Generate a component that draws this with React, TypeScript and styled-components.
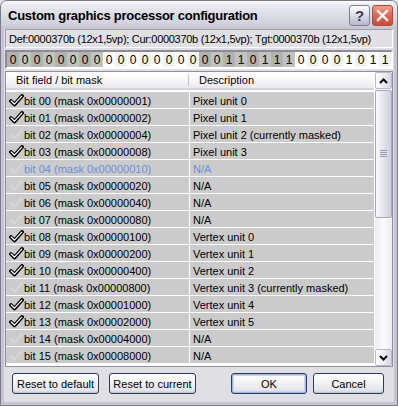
import React from "react";
import styled, { createGlobalStyle, css } from "styled-components";

const GlobalStyle = createGlobalStyle`
  html, body {
    margin: 0;
    padding: 0;
    background: #e0dfe3;
  }
  body {
    font-family: "Liberation Sans", Arial, sans-serif;
    font-size: 11px;
    color: #000;
  }
`;

const Window = styled.div`
  width: 398px;
  height: 406px;
  box-sizing: border-box;
  display: flex;
  flex-direction: column;
  background: #c4c4d2;
  border: 1px solid #7b7b8c;
  border-radius: 7px 7px 0 0;
  overflow: hidden;
`;

const TitleBar = styled.div`
  height: 28px;
  flex: none;
  display: flex;
  align-items: center;
  padding: 0 4px 0 7px;
  background: linear-gradient(
    to bottom,
    #ffffff 0%,
    #ececf2 12%,
    #dedee6 45%,
    #d2d2dc 80%,
    #c4c4d0 100%
  );
`;

const Title = styled.div`
  flex: 1;
  font-family: "Liberation Sans", Arial, sans-serif;
  font-weight: bold;
  font-size: 13px;
  color: #000;
  letter-spacing: -0.25px;
`;

const CaptionButton = styled.div<{ $close?: boolean }>`
  width: 21px;
  height: 21px;
  box-sizing: border-box;
  margin-left: 2px;
  border-radius: 3px;
  border: 1px solid ${(p) => (p.$close ? "#b24a3c" : "#7e7e90")};
  display: flex;
  align-items: center;
  justify-content: center;
  ${(p) =>
    p.$close
      ? css`
          background: linear-gradient(to bottom, #f4a088 0%, #e06a52 45%, #cc4a34 100%);
        `
      : css`
          background: linear-gradient(to bottom, #ffffff 0%, #dcdce8 50%, #b6b6c8 100%);
        `}
`;

const HelpGlyph = styled.span`
  font-family: "Liberation Sans", Arial, sans-serif;
  font-weight: bold;
  font-size: 15px;
  color: #3c3c50;
  line-height: 1;
`;

const Client = styled.div`
  flex: 1;
  display: flex;
  flex-direction: column;
  margin: 0 3px 3px;
  background: #e0dfe3;
`;

const InfoBox = styled.div`
  height: 19px;
  box-sizing: border-box;
  margin: 0 1px;
  border: 1px solid;
  border-color: #a0a0a8 #ffffff #ffffff #a0a0a8;
  display: flex;
  align-items: center;
  padding-left: 3px;
  white-space: nowrap;
  overflow: hidden;
  letter-spacing: -0.3px;
`;

const BitBar = styled.div`
  height: 19px;
  box-sizing: border-box;
  margin: 2px 1px 0;
  border: 2px solid;
  border-color: #8c8c94 #ffffff #ffffff #8c8c94;
  display: flex;
  background: #ffffff;
`;

const BitCell = styled.div<{ $shade: string }>`
  width: 12px;
  flex: none;
  background: ${(p) => p.$shade};
  display: flex;
  align-items: center;
  justify-content: center;
  font-size: 12px;
`;

const ListView = styled.div`
  height: 296px;
  box-sizing: border-box;
  margin: 2px 1px 0;
  border: 1px solid #8f8fa0;
  background: #ffffff;
  display: flex;
`;

const ListBody = styled.div`
  flex: 1;
  display: flex;
  flex-direction: column;
  overflow: hidden;
`;

const Header = styled.div`
  height: 18px;
  flex: none;
  display: grid;
  grid-template-columns: 183px 1fr;
  background: linear-gradient(to bottom, #ffffff 0%, #f6f6f8 60%, #e8e8ec 100%);
  border-bottom: 2px solid #d4d4dc;
  box-sizing: border-box;
`;

const HeaderCell = styled.div<{ $divider?: boolean }>`
  display: flex;
  align-items: center;
  padding-left: 10px;
  position: relative;
  ${(p) =>
    p.$divider &&
    css`
      &::after {
        content: "";
        position: absolute;
        right: 0;
        top: 2px;
        bottom: 2px;
        width: 1px;
        background: #c4c4cc;
      }
    `}
`;

const Rows = styled.div`
  display: flex;
  flex-direction: column;
  padding-top: 2px;
`;

const Row = styled.div<{ $hot?: boolean }>`
  height: 17px;
  flex: none;
  display: grid;
  grid-template-columns: 183px 1fr;
  column-gap: 1px;
  border-bottom: 1px solid #ffffff;
  box-sizing: border-box;
  color: ${(p) => (p.$hot ? "#6a90dc" : "#000")};
`;

const Cell = styled.div<{ $first?: boolean }>`
  background: #cbcbcb;
  display: flex;
  align-items: center;
  padding-left: ${(p) => (p.$first ? "2px" : "3px")};
  padding-top: 1px;
  white-space: nowrap;
  overflow: hidden;
`;

const CheckSlot = styled.span`
  width: 16px;
  height: 14px;
  flex: none;
  display: flex;
  align-items: center;
  justify-content: center;
`;

const ScrollBar = styled.div`
  width: 17px;
  flex: none;
  display: flex;
  flex-direction: column;
  background: #f2f2f6;
  border-left: 1px solid #ffffff;
`;

const ScrollButton = styled.div`
  height: 17px;
  flex: none;
  box-sizing: border-box;
  border: 1px solid #b8b8c8;
  border-radius: 2px;
  background: linear-gradient(to right, #ffffff 0%, #ececf2 50%, #d6d6e2 100%);
  display: flex;
  align-items: center;
  justify-content: center;
`;

const Track = styled.div`
  flex: 1;
  display: flex;
  flex-direction: column;
  padding-top: 1px;
  background: linear-gradient(to right, #eeeef2, #fafafc 50%, #eeeef2);
`;

const Thumb = styled.div`
  height: 128px;
  box-sizing: border-box;
  border: 1px solid #a8a8bc;
  border-radius: 2px;
  background: linear-gradient(to right, #f8f8fc 0%, #e6e6ee 45%, #d0d0de 100%);
  display: flex;
  align-items: center;
  justify-content: center;
`;

const ButtonRow = styled.div`
  flex: 1;
  display: flex;
  align-items: flex-start;
  padding: 6px 10px 0 8px;
`;

const PushButton = styled.button<{ $width: number; $default?: boolean; $gap?: number }>`
  width: ${(p) => p.$width}px;
  height: 21px;
  margin-left: ${(p) => p.$gap ?? 0}px;
  box-sizing: border-box;
  border: 1px solid #2c3c5c;
  border-radius: 3px;
  background: linear-gradient(to bottom, #ffffff 0%, #f4f4f6 40%, #e4e4ea 85%, #cfcfd8 100%);
  font-family: "Liberation Sans", Arial, sans-serif;
  font-size: 11px;
  color: #000;
  padding: 0;
  box-shadow: ${(p) =>
    p.$default
      ? "inset 0 0 0 1px #9fb4de, inset 0 0 0 2px #c8d6f0"
      : "inset 0 -1px 0 #c4c4d0"};
`;

const Spacer = styled.div`
  flex: 1;
`;

const CheckMark: React.FC<{ on: boolean }> = ({ on }) => (
  <svg width="15" height="13" viewBox="0 0 15 13">
    {on ? (
      <>
        <path d="M2 7 L5.5 10.5 L13 2" fill="none" stroke="#000" strokeWidth="3.8" strokeLinecap="round" strokeLinejoin="round" />
        <path d="M2.2 7 L5.5 10.2 L12.8 2.2" fill="none" stroke="#ffffff" strokeWidth="1.2" strokeLinecap="round" strokeLinejoin="round" />
      </>
    ) : (
      <path d="M2 7 L5.5 10.5 L13 2" fill="none" stroke="#d6d6d6" strokeWidth="2.4" strokeLinecap="round" strokeLinejoin="round" />
    )}
  </svg>
);

const value = 0x0000370b;

const descriptions = [
  "Pixel unit 0",
  "Pixel unit 1",
  "Pixel unit 2 (currently masked)",
  "Pixel unit 3",
  "N/A",
  "N/A",
  "N/A",
  "N/A",
  "Vertex unit 0",
  "Vertex unit 1",
  "Vertex unit 2",
  "Vertex unit 3 (currently masked)",
  "Vertex unit 4",
  "Vertex unit 5",
  "N/A",
  "N/A",
];

const hex8 = (n: number) => "0x" + n.toString(16).padStart(8, "0");

const cellShade = (pos: number) => {
  const byte = Math.floor(pos / 8);
  const odd = pos % 2 === 1;
  if (byte % 2 === 0) return odd ? "#c2c2c2" : "#b2b2b2";
  return odd ? "#f2f2f2" : "#ffffff";
};

export default function App() {
  const bits = Array.from({ length: 32 }, (_, i) => (value >>> (31 - i)) & 1);
  return (
    <>
      <GlobalStyle />
      <Window>
        <TitleBar>
          <Title>Custom graphics processor configuration</Title>
          <CaptionButton>
            <HelpGlyph>?</HelpGlyph>
          </CaptionButton>
          <CaptionButton $close>
            <svg width="13" height="13" viewBox="0 0 13 13">
              <path d="M2 2 L11 11 M11 2 L2 11" stroke="#ffffff" strokeWidth="2.4" strokeLinecap="square" />
            </svg>
          </CaptionButton>
        </TitleBar>
        <Client>
          <InfoBox>Def:0000370b (12x1,5vp); Cur:0000370b (12x1,5vp); Tgt:0000370b (12x1,5vp)</InfoBox>
          <BitBar>
            {bits.map((b, i) => (
              <BitCell key={i} $shade={cellShade(i)}>
                {b}
              </BitCell>
            ))}
          </BitBar>
          <ListView>
            <ListBody>
              <Header>
                <HeaderCell $divider>Bit field / bit mask</HeaderCell>
                <HeaderCell>Description</HeaderCell>
              </Header>
              <Rows>
                {descriptions.map((d, i) => (
                  <Row key={i} $hot={i === 4}>
                    <Cell $first>
                      <CheckSlot>
                        <CheckMark on={((value >>> i) & 1) === 1} />
                      </CheckSlot>
                      bit {String(i).padStart(2, "0")} (mask {hex8(1 << i)})
                    </Cell>
                    <Cell>{d}</Cell>
                  </Row>
                ))}
              </Rows>
            </ListBody>
            <ScrollBar>
              <ScrollButton>
                <svg width="9" height="6" viewBox="0 0 9 6">
                  <path d="M1 5 L4.5 1.5 L8 5" fill="none" stroke="#000" strokeWidth="2" />
                </svg>
              </ScrollButton>
              <Track>
                <Thumb>
                  <svg width="7" height="8" viewBox="0 0 7 8">
                    <path d="M0 0.5 H7 M0 2.5 H7 M0 4.5 H7 M0 6.5 H7" stroke="#9a9ab0" strokeWidth="1" />
                  </svg>
                </Thumb>
              </Track>
              <ScrollButton>
                <svg width="9" height="6" viewBox="0 0 9 6">
                  <path d="M1 1 L4.5 4.5 L8 1" fill="none" stroke="#000" strokeWidth="2" />
                </svg>
              </ScrollButton>
            </ScrollBar>
          </ListView>
          <ButtonRow>
            <PushButton $width={87}>Reset to default</PushButton>
            <PushButton $width={87} $gap={10}>Reset to current</PushButton>
            <Spacer />
            <PushButton $width={76} $default>OK</PushButton>
            <PushButton $width={71} $gap={6}>Cancel</PushButton>
          </ButtonRow>
        </Client>
      </Window>
    </>
  );
}
